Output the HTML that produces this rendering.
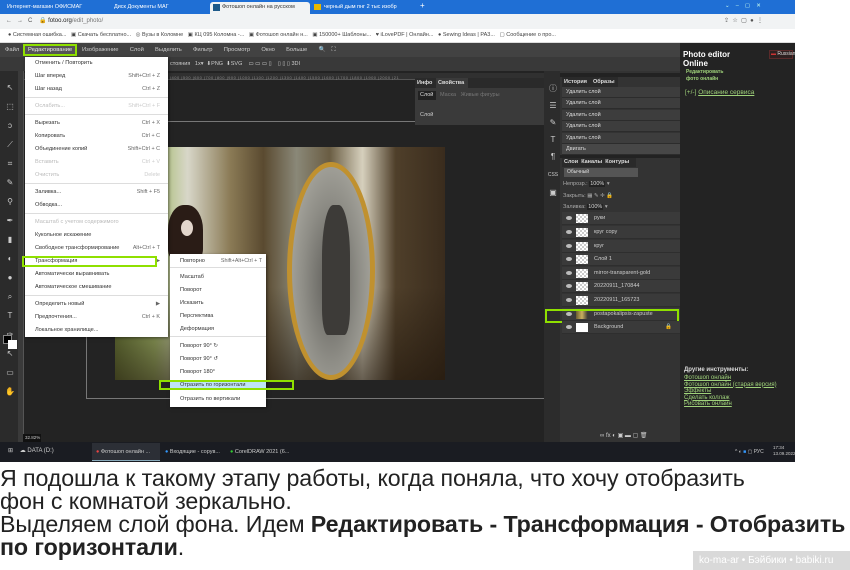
<!DOCTYPE html>
<html><head><meta charset="utf-8">
<style>
*{margin:0;padding:0;box-sizing:border-box}
body{width:850px;height:570px;background:#fff;position:relative;overflow:hidden;font-family:"Liberation Sans",sans-serif}
.a{position:absolute}
.t{position:absolute;font-size:5.5px;white-space:nowrap;line-height:7px}
.mi{position:absolute;left:10px;font-size:5.6px;color:#333;white-space:nowrap}
.mi.d{color:#bbb}
.sc{position:absolute;right:8px;font-size:5.4px;color:#666;white-space:nowrap}
.sc.d{color:#ccc}
.sep{position:absolute;left:0;right:0;height:1px;background:#ddd}
.row{position:absolute;left:562px;width:120px;height:11px;background:#3d3d3d;border-bottom:1px solid #2c2c2c;color:#ddd;font-size:5.5px;line-height:11px;padding-left:4px}
.lay{position:absolute;left:562px;width:118px;height:13px;background:#3a3a3a;border-bottom:1px solid #2e2e2e;color:#ccc;font-size:5.5px;line-height:13px}
.lay .th{position:absolute;left:14px;top:2px;width:12px;height:9px;background:repeating-conic-gradient(#ccc 0 25%,#fff 0 50%) 0 0/4px 4px}
.lay .ey{position:absolute;left:4px;top:4px;width:6px;height:4px;border-radius:50%;background:#bbb}
.lay span{position:absolute;left:32px}
.txt{position:absolute;left:0;font-size:23.5px;line-height:24px;color:#222;white-space:nowrap;transform:scaleX(.988);transform-origin:0 0;letter-spacing:-.1px}
.lk{color:#9fd27a;text-decoration:underline;font-size:6px;position:absolute;left:684px;white-space:nowrap}
</style></head><body>
<div class="a" style="left:0;top:0;width:795px;height:14px;background:#1f6fd5"></div>
<div class="a" style="left:3px;top:2px;width:100px;height:11px;"><div class="t" style="color:#fff;left:4px;top:2px">Интернет-магазин ОФИСМАГ</div></div>
<div class="a" style="left:110px;top:2px;width:90px;height:11px"><div class="t" style="color:#fff;left:4px;top:2px">Диск Документы МАГ</div></div>
<div class="a" style="left:210px;top:2px;width:100px;height:12px;background:#f1f3f4;border-radius:3px 3px 0 0"><div class="t" style="color:#333;left:12px;top:2px">Фотошоп онлайн на русском</div><div class="a" style="left:3px;top:2px;width:7px;height:7px;background:#1e5a8a"></div></div>
<div class="a" style="left:314px;top:2px;width:90px;height:11px"><div class="t" style="color:#fff;left:10px;top:2px">черный дым пнг 2 тыс изобр</div><div class="a" style="left:0;top:2px;width:7px;height:6px;background:#e8b800"></div></div>
<div class="t" style="color:#fff;left:420px;top:2px;font-size:8px">+</div>
<div class="t" style="color:#cfe;left:725px;top:3px">⌄ &nbsp;&nbsp; – &nbsp;&nbsp; ▢ &nbsp;&nbsp; ✕</div>
<div class="a" style="left:0;top:14px;width:795px;height:15px;background:#f1f3f4"></div>
<div class="t" style="color:#555;left:6px;top:18px;font-size:6px">←&nbsp;&nbsp; →&nbsp;&nbsp; C&nbsp;&nbsp;&nbsp; 🔒 <span style="color:#222">fotoo.org</span><span style="color:#777">/edit_photo/</span></div>
<div class="t" style="color:#555;left:724px;top:18px;font-size:6px">⇪ &nbsp;☆ &nbsp;▢ &nbsp;● &nbsp;⋮</div>
<div class="a" style="left:0;top:29px;width:795px;height:14px;background:#fff;border-bottom:1px solid #ddd"></div>
<div class="t" style="color:#444;left:8px;top:32px">● Системная ошибка... &nbsp;&nbsp;▣ Скачать бесплатно... &nbsp;&nbsp;◎ Вузы в Коломне &nbsp;&nbsp;▣ КЦ 095 Коломна -... &nbsp;&nbsp;▣ Фотошоп онлайн н... &nbsp;&nbsp;▣ 150000+ Шаблоны... &nbsp;&nbsp;♥ iLovePDF | Онлайн... &nbsp;&nbsp;● Sewing Ideas | PA3... &nbsp;&nbsp;▢ Сообщение о про...</div>
<div class="a" style="left:0;top:43px;width:680px;height:399px;background:#232323"></div>
<div class="a" style="left:0;top:43px;width:680px;height:14px;background:#424242"></div>
<div class="t" style="color:#ccc;left:5px;top:47px;font-size:5.8px">Файл</div>
<div class="a" style="left:23px;top:44px;width:54px;height:12px;border:2px solid #8fe000;background:#555"></div>
<div class="t" style="color:#eee;left:28px;top:47px;font-size:5.8px">Редактирование</div>
<div class="t" style="color:#ccc;left:82px;top:47px;font-size:5.8px;word-spacing:4px">Изображение &nbsp;Слой &nbsp;Выделить &nbsp;Фильтр &nbsp;Просмотр &nbsp;Окно &nbsp;Больше &nbsp;🔍 ⛶</div>
<div class="a" style="left:0;top:57px;width:680px;height:14px;background:#393939"></div>
<div class="t" style="color:#ccc;left:170px;top:61px">стояния &nbsp;&nbsp;1x▾ &nbsp;⬇PNG &nbsp;⬇SVG &nbsp;&nbsp;&nbsp;▭ ▭ ▭ ▯ &nbsp;&nbsp;&nbsp;▯ ▯ ▯ 3DI</div>
<div class="a" style="left:0;top:71px;width:18px;height:371px;background:#2b2b2b"></div>
<div class="t" style="color:#ccc;left:4px;top:78px;font-size:8px;line-height:19px;width:12px;text-align:center">↖<br>⬚<br>ↄ<br>⟋<br>⌗<br>✎<br>⚲<br>✒<br>▮<br>◐<br>●<br>⌕<br>T<br>✑<br>↖<br>▭<br>✋</div>
<div class="a" style="left:18px;top:71px;width:6px;height:371px;background:#3a3a3a;border-right:1px solid #555"></div>
<div class="a" style="left:24px;top:73px;width:520px;height:7px;background:#303030;border-bottom:1px solid #555"></div>
<div class="t" style="color:#888;left:170px;top:74px;font-size:4px;letter-spacing:.5px">|400 |500 |600 |700 |800 |900 |1000 |1100 |1200 |1300 |1400 |1500 |1600 |1700 |1800 |1900 |2000 |21</div>
<div class="a" style="left:3px;top:335px;width:9px;height:9px;background:#000;border:1px solid #888"></div>
<div class="a" style="left:8px;top:340px;width:9px;height:9px;background:#fff"></div>
<div class="a" style="left:23px;top:434px;width:18px;height:8px;background:#111;color:#ccc;font-size:4.5px;line-height:8px;padding-left:2px">32.82%</div>
<div class="a" style="left:86px;top:121px;width:460px;height:1px;background:#777"></div>
<div class="a" style="left:86px;top:121px;width:1px;height:278px;background:#777"></div>
<div class="a" style="left:86px;top:398px;width:460px;height:1px;background:#777"></div>
<div class="a" style="left:115px;top:147px;width:330px;height:233px;background:linear-gradient(90deg,#6a7b3a 0,#a3b96a 12%,#d8d7c9 22%,#8a7a55 35%,#5a4a30 45%,#8a8878 55%,#6a5d43 65%,#d6d0bd 75%,#4f3f2a 85%,#3a2c1d 100%)"></div>
<div class="a" style="left:115px;top:147px;width:330px;height:233px;background:linear-gradient(180deg,rgba(0,0,0,0) 60%,rgba(30,20,10,.6) 100%)"></div>
<div class="a" style="left:287px;top:162px;width:88px;height:218px;border-radius:50%;border:5px solid #c0912f;background:radial-gradient(ellipse at 50% 55%,#5d5c58 0,#8e8d86 50%,#b7b6ad 100%)"></div>
<div class="a" style="left:322px;top:205px;width:28px;height:130px;border-radius:40% 40% 20% 20%;background:#3d3b38"></div>
<div class="a" style="left:168px;top:205px;width:35px;height:55px;border-radius:45% 45% 20% 20%;background:#2a1c16"></div>
<div class="a" style="left:181px;top:220px;width:12px;height:16px;border-radius:50%;background:#e3d6cc"></div>
<div class="a" style="left:415px;top:78px;width:130px;height:47px;background:#3a3a3a"></div>
<div class="a" style="left:415px;top:78px;width:130px;height:10px;background:#2a2a2a"></div>
<div class="t" style="color:#ddd;left:417px;top:80px;font-weight:bold">Инфо</div>
<div class="a" style="left:436px;top:78px;width:32px;height:10px;background:#3a3a3a"></div>
<div class="t" style="color:#ddd;left:438px;top:80px;font-weight:bold">Свойства</div>
<div class="a" style="left:418px;top:91px;width:18px;height:9px;background:#222"></div>
<div class="t" style="color:#ddd;left:420px;top:92px">Слой</div>
<div class="t" style="color:#777;left:440px;top:92px">Маска &nbsp;&nbsp;Живые фигуры</div>
<div class="t" style="color:#ccc;left:420px;top:112px">Слой</div>
<div class="a" style="left:544px;top:71px;width:16px;height:371px;background:#2c2c2c"></div>
<div class="t" style="color:#ccc;left:547px;top:80px;font-size:8px;line-height:17px;width:12px;text-align:center">ⓘ<br>☰<br>✎<br>T<br>¶<br><span style="font-size:5px">CSS</span><br>▣</div>
<div class="a" style="left:560px;top:71px;width:123px;height:371px;background:#333"></div>
<div class="a" style="left:560px;top:73px;width:123px;height:4px;background:#222"></div>
<div class="a" style="left:562px;top:77px;width:56px;height:10px;background:#2a2a2a"></div>
<div class="t" style="color:#ddd;left:564px;top:79px;font-weight:bold">История</div>
<div class="t" style="color:#ddd;left:593px;top:79px;font-weight:bold">Образы</div>
<div class="row" style="top:87px">Удалить слой</div>
<div class="row" style="top:98px">Удалить слой</div>
<div class="row" style="top:110px">Удалить слой</div>
<div class="row" style="top:121px">Удалить слой</div>
<div class="row" style="top:133px">Удалить слой</div>
<div class="row" style="top:144px;background:#474747">Двигать</div>
<div class="a" style="left:560px;top:155px;width:123px;height:3px;background:#222"></div>
<div class="a" style="left:562px;top:158px;width:74px;height:9px;background:#2a2a2a"></div>
<div class="t" style="color:#ddd;left:564px;top:159px;font-weight:bold">Слои &nbsp;Каналы &nbsp;Контуры</div>
<div class="a" style="left:564px;top:168px;width:74px;height:9px;background:#555;color:#ddd;font-size:5px;line-height:9px;padding-left:3px">Обычный</div>
<div class="t" style="color:#aaa;left:563px;top:181px">Непрозр.: <span style="background:#222;color:#ddd;padding:0 1px">100%</span> ▾</div>
<div class="t" style="color:#aaa;left:563px;top:193px">Закрыть: ▦ ✎ ✛ 🔒</div>
<div class="t" style="color:#aaa;left:563px;top:204px">Заливка: <span style="background:#222;color:#ddd;padding:0 1px">100%</span> ▾</div>
<div class="lay" style="top:212px"><i class="ey"></i><i class="th"></i><span>руки</span></div>
<div class="lay" style="top:226px"><i class="ey"></i><i class="th"></i><span>круг copy</span></div>
<div class="lay" style="top:240px"><i class="ey"></i><i class="th"></i><span>круг</span></div>
<div class="lay" style="top:253px"><i class="ey"></i><i class="th"></i><span>Слой 1</span></div>
<div class="lay" style="top:267px"><i class="ey"></i><i class="th"></i><span>mirror-transparent-gold</span></div>
<div class="lay" style="top:280px"><i class="ey"></i><i class="th"></i><span>20220911_170844</span></div>
<div class="lay" style="top:294px"><i class="ey"></i><i class="th"></i><span>20220911_165723</span></div>
<div class="lay" style="top:308px"><i class="ey"></i><i class="th" style="background:linear-gradient(90deg,#6a5d30,#c9b060,#333)"></i><span>postapokalipsis-zapuste</span></div>
<div class="a" style="left:545px;top:309px;width:134px;height:14px;border:2px solid #8fe000"></div>
<div class="lay" style="top:321px"><i class="ey"></i><i class="th" style="background:#fff"></i><span>Background</span><b style="position:absolute;right:8px;color:#888">🔒</b></div>
<div class="t" style="color:#ccc;left:600px;top:433px;font-size:6px">∞ fx ◐ ▣ ▬ ▢ 🗑</div>
<div class="a" style="left:680px;top:43px;width:115px;height:399px;background:#232323"></div>
<div class="t" style="color:#fff;left:683px;top:50px;font-size:8px;line-height:9px;font-weight:bold">Photo editor<br>Online</div>
<div class="t" style="color:#9fd27a;left:686px;top:69px;font-size:5px;line-height:7px;font-weight:bold">Редактировать<br>фото онлайн</div>
<div class="a" style="left:769px;top:50px;width:24px;height:9px;border:1px solid #5a2a2a;background:#2e2020"></div>
<div class="t" style="color:#ddd;left:771px;top:51px;font-size:5px"><span style="color:#c33">▬</span> Russian</div>
<div class="t" style="color:#9fd27a;left:685px;top:89px;font-size:6.5px">[+/-] <u>Описание сервиса</u></div>
<div class="t" style="color:#ddd;left:684px;top:367px;font-size:6px;font-weight:bold">Другие инструменты:</div>
<div class="lk" style="top:375px">Фотошоп онлайн</div>
<div class="lk" style="top:381.5px">Фотошоп онлайн (старая версия)</div>
<div class="lk" style="top:388px">Эффекты</div>
<div class="lk" style="top:394.5px">Сделать коллаж</div>
<div class="lk" style="top:401px">Рисовать онлайн</div>
<div class="a" style="left:25px;top:57px;width:143px;height:280px;background:#fff;box-shadow:1px 1px 3px rgba(0,0,0,.5)">
<div class="mi" style="top:3px">Отменить / Повторить</div>
<div class="mi" style="top:16px">Шаг вперед</div><div class="sc" style="top:16px">Shift+Ctrl + Z</div>
<div class="mi" style="top:29px">Шаг назад</div><div class="sc" style="top:29px">Ctrl + Z</div>
<div class="sep" style="top:40px"></div>
<div class="mi d" style="top:46px">Ослабить...</div><div class="sc d" style="top:46px">Shift+Ctrl + F</div>
<div class="sep" style="top:57px"></div>
<div class="mi" style="top:63px">Вырезать</div><div class="sc" style="top:63px">Ctrl + X</div>
<div class="mi" style="top:76px">Копировать</div><div class="sc" style="top:76px">Ctrl + C</div>
<div class="mi" style="top:89px">Объединение копий</div><div class="sc" style="top:89px">Shift+Ctrl + C</div>
<div class="mi d" style="top:102px">Вставить</div><div class="sc d" style="top:102px">Ctrl + V</div>
<div class="mi d" style="top:115px">Очистить</div><div class="sc d" style="top:115px">Delete</div>
<div class="sep" style="top:126px"></div>
<div class="mi" style="top:132px">Заливка...</div><div class="sc" style="top:132px">Shift + F5</div>
<div class="mi" style="top:145px">Обводка...</div>
<div class="sep" style="top:156px"></div>
<div class="mi d" style="top:162px">Масштаб с учетом содержимого</div>
<div class="mi" style="top:175px">Кукольное искажение</div>
<div class="mi" style="top:188px">Свободное трансформирование</div><div class="sc" style="top:188px">Alt+Ctrl + T</div>
<div class="mi" style="top:201px">Трансформация</div><div class="sc" style="top:201px">▶</div>
<div class="mi" style="top:214px">Автоматически выравнивать</div>
<div class="mi" style="top:227px">Автоматическое смешивание</div>
<div class="sep" style="top:238px"></div>
<div class="mi" style="top:244px">Определить новый</div><div class="sc" style="top:244px">▶</div>
<div class="mi" style="top:257px">Предпочтения...</div><div class="sc" style="top:257px">Ctrl + K</div>
<div class="mi" style="top:270px">Локальное хранилище...</div>
</div>
<div class="a" style="left:22px;top:256px;width:135px;height:11px;border:2px solid #8fe000"></div>
<div class="a" style="left:170px;top:254px;width:96px;height:153px;background:#fff;box-shadow:1px 1px 3px rgba(0,0,0,.5)">
<div class="mi" style="top:4px">Повторно</div><div class="sc" style="top:4px;right:4px">Shift+Alt+Ctrl + T</div>
<div class="sep" style="top:13px"></div>
<div class="mi" style="top:20px">Масштаб</div>
<div class="mi" style="top:33px">Поворот</div>
<div class="mi" style="top:46px">Исказить</div>
<div class="mi" style="top:59px">Перспектива</div>
<div class="mi" style="top:72px">Деформация</div>
<div class="sep" style="top:82px"></div>
<div class="mi" style="top:89px">Поворот 90° ↻</div>
<div class="mi" style="top:102px">Поворот 90° ↺</div>
<div class="mi" style="top:115px">Поворот 180°</div>
<div class="a" style="left:0;top:126px;width:96px;height:10px;background:#bfe3f7"></div>
<div class="mi" style="top:128px">Отразить по горизонтали</div>
<div class="mi" style="top:142px">Отразить по вертикали</div>
</div>
<div class="a" style="left:159px;top:380px;width:135px;height:10px;border:2px solid #8fe000"></div>
<div class="a" style="left:0;top:442px;width:795px;height:20px;background:#1a1c22"></div>
<div class="t" style="color:#ccc;left:8px;top:448px;font-size:6px">⊞ &nbsp;&nbsp;&nbsp;☁ DATA (D:)</div>
<div class="a" style="left:92px;top:443px;width:68px;height:18px;background:#2c2f36;border-bottom:1px solid #8ab"></div>
<div class="t" style="color:#ccc;left:96px;top:449px"><span style="color:#e44">●</span> Фотошоп онлайн ...</div>
<div class="t" style="color:#ccc;left:165px;top:449px"><span style="color:#39f">●</span> Входящие - сорув...</div>
<div class="t" style="color:#ccc;left:230px;top:449px"><span style="color:#3c3">●</span> CorelDRAW 2021 (6...</div>
<div class="t" style="color:#ccc;left:735px;top:449px;font-size:5px">^ ◐ <span style="color:#39f">■</span> ▢ РУС</div>
<div class="t" style="color:#ccc;left:773px;top:445px;font-size:4.5px;line-height:6px">17:34<br>13.09.2022</div>
<div class="txt" style="top:466px">Я подошла к такому этапу работы, когда поняла, что хочу отобразить</div>
<div class="txt" style="top:489px">фон с комнатой зеркально.</div>
<div class="txt" style="top:512px">Выделяем слой фона. Идем <b>Редактировать - Трансформация - Отобразить</b></div>
<div class="txt" style="top:535px"><b>по горизонтали</b>.</div>
<div class="a" style="left:693px;top:551px;width:157px;height:19px;background:#d9d9d9;color:#fff;font-size:10px;line-height:19px;padding-left:6px;white-space:nowrap">ko-ma-ar • Бэйбики • babiki.ru</div>
</body></html>
